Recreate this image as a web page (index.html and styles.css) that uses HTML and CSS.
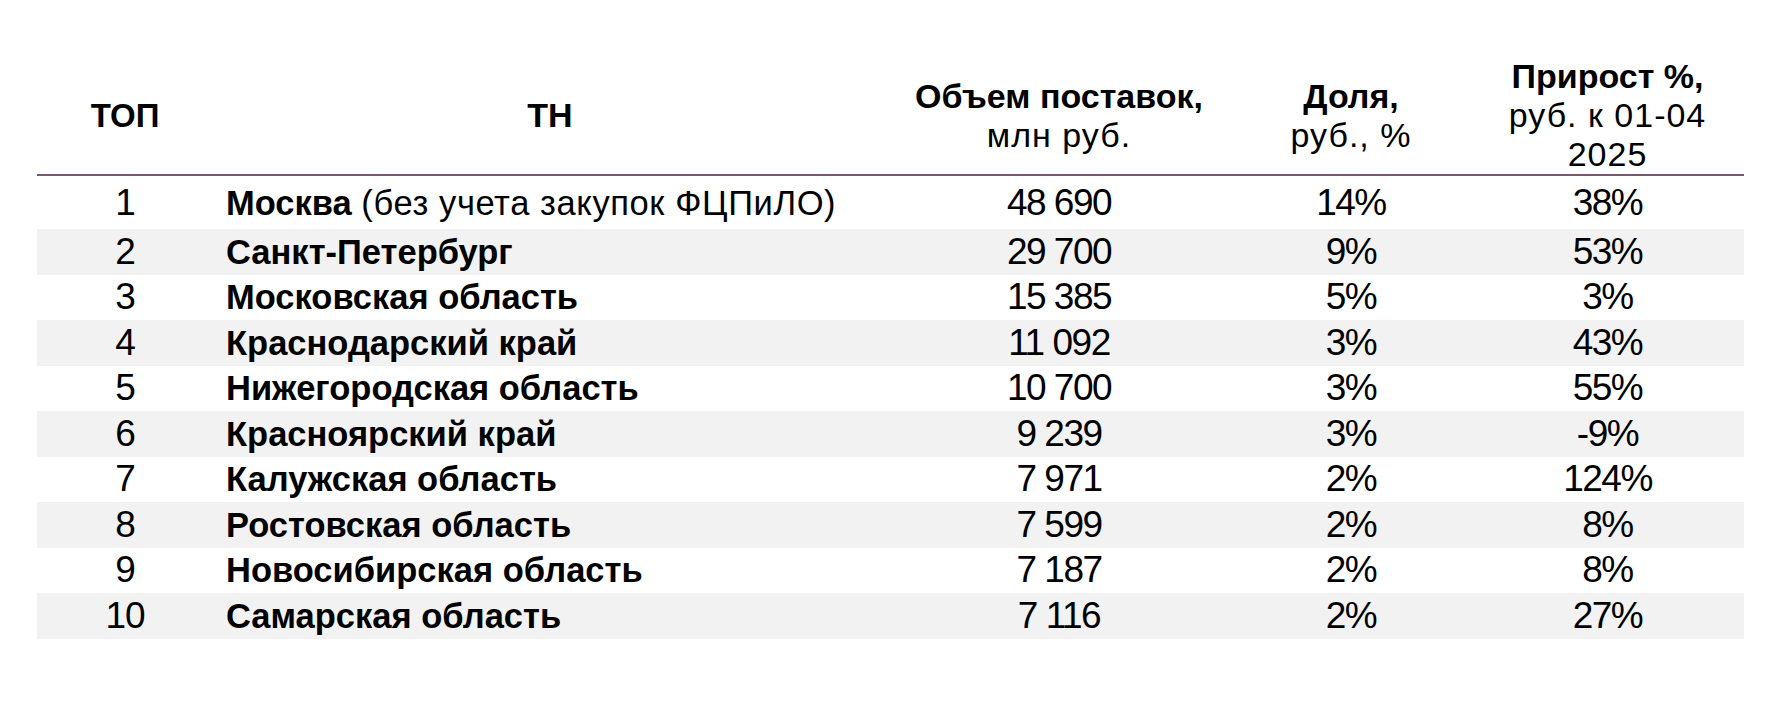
FILE: index.html
```html
<!DOCTYPE html>
<html lang="ru">
<head>
<meta charset="utf-8">
<link rel="stylesheet" href="styles.css">
</head>
<body>
<div class="table">
  <div class="row head">
    <div class="c c1"><b>ТОП</b></div>
    <div class="c c2 center"><b>ТН</b></div>
    <div class="c c3"><b>Объем поставок,</b><br><span class="sub">млн руб.</span></div>
    <div class="c c4"><b>Доля,</b><br><span class="sub">руб., %</span></div>
    <div class="c c5"><b>Прирост %,</b><br><span class="sub">руб. к 01-04</span><br><span class="sub">2025</span></div>
  </div>
  <div class="row first">
    <div class="c c1">1</div>
    <div class="c c2"><b>Москва</b> <span class="note">(без учета закупок ФЦПиЛО)</span></div>
    <div class="c c3 num">48 690</div>
    <div class="c c4 num">14%</div>
    <div class="c c5 num">38%</div>
  </div>
  <div class="row alt">
    <div class="c c1">2</div>
    <div class="c c2"><b>Санкт-Петербург</b></div>
    <div class="c c3 num">29 700</div>
    <div class="c c4 num">9%</div>
    <div class="c c5 num">53%</div>
  </div>
  <div class="row">
    <div class="c c1">3</div>
    <div class="c c2"><b>Московская область</b></div>
    <div class="c c3 num">15 385</div>
    <div class="c c4 num">5%</div>
    <div class="c c5 num">3%</div>
  </div>
  <div class="row alt">
    <div class="c c1">4</div>
    <div class="c c2"><b>Краснодарский край</b></div>
    <div class="c c3 num">11 092</div>
    <div class="c c4 num">3%</div>
    <div class="c c5 num">43%</div>
  </div>
  <div class="row">
    <div class="c c1">5</div>
    <div class="c c2"><b>Нижегородская область</b></div>
    <div class="c c3 num">10 700</div>
    <div class="c c4 num">3%</div>
    <div class="c c5 num">55%</div>
  </div>
  <div class="row alt">
    <div class="c c1">6</div>
    <div class="c c2"><b>Красноярский край</b></div>
    <div class="c c3 num">9 239</div>
    <div class="c c4 num">3%</div>
    <div class="c c5 num">-9%</div>
  </div>
  <div class="row">
    <div class="c c1">7</div>
    <div class="c c2"><b>Калужская область</b></div>
    <div class="c c3 num">7 971</div>
    <div class="c c4 num">2%</div>
    <div class="c c5 num">124%</div>
  </div>
  <div class="row alt">
    <div class="c c1">8</div>
    <div class="c c2"><b>Ростовская область</b></div>
    <div class="c c3 num">7 599</div>
    <div class="c c4 num">2%</div>
    <div class="c c5 num">8%</div>
  </div>
  <div class="row">
    <div class="c c1">9</div>
    <div class="c c2"><b>Новосибирская область</b></div>
    <div class="c c3 num">7 187</div>
    <div class="c c4 num">2%</div>
    <div class="c c5 num">8%</div>
  </div>
  <div class="row alt">
    <div class="c c1">10</div>
    <div class="c c2"><b>Самарская область</b></div>
    <div class="c c3 num">7 116</div>
    <div class="c c4 num">2%</div>
    <div class="c c5 num">27%</div>
  </div>
</div>
</body>
</html>
```
FILE: styles.css
```css
html, body {
  margin: 0;
  padding: 0;
  background: #ffffff;
}
body {
  font-family: "Liberation Sans", Arial, sans-serif;
  color: #000000;
}
.table {
  width: 1707px;
  margin-left: 37px;
  padding-top: 57px;
}
.row {
  display: grid;
  grid-template-columns: 176px 674px 344px 240px 273px;
  height: 45.5px;
  align-items: center;
  font-size: 34.5px;
  line-height: 40px;
}
.row.head {
  height: 117px;
  line-height: 39px;
  font-size: 34px;
  border-bottom: 2px solid #76596e;
}
.row.first {
  height: 53px;
}
.row.alt {
  background: #f2f2f2;
}
.c {
  text-align: center;
  white-space: nowrap;
}
.c2 {
  text-align: left;
  padding-left: 13px;
}
.c2.center {
  text-align: center;
  padding-left: 0;
}
.note {
  letter-spacing: 0.6px;
}
.num {
  font-size: 37px;
  letter-spacing: -1.5px;
}
.c1 {
  font-size: 37px;
  letter-spacing: -1px;
}
.head .c1 {
  font-size: 33px;
  letter-spacing: 0;
}
.sub {
  font-weight: 400;
  letter-spacing: 1px;
}
b {
  font-weight: 700;
}
```
